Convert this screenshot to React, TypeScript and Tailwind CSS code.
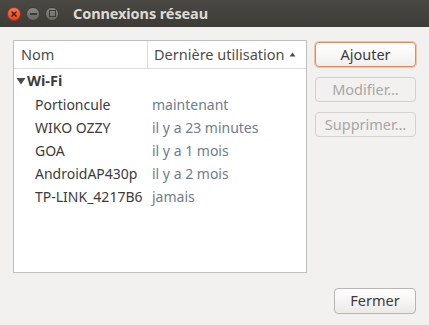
const rows = [
  { name: "Portioncule", when: "maintenant" },
  { name: "WIKO OZZY", when: "il y a 23 minutes" },
  { name: "GOA", when: "il y a 1 mois" },
  { name: "AndroidAP430p", when: "il y a 2 mois" },
  { name: "TP-LINK_4217B6", when: "jamais" },
];

function WinButton({ kind }: { kind: "close" | "min" | "max" }) {
  if (kind === "close") {
    return (
      <div className="w-[14px] h-[14px] rounded-full bg-gradient-to-b from-[#f77b52] to-[#e0451a] border border-[#a8330f] flex items-center justify-center">
        <svg width="6" height="6" viewBox="0 0 6 6">
          <path d="M0.5 0.5 L5.5 5.5 M5.5 0.5 L0.5 5.5" stroke="#3a1a10" strokeWidth="1.3" />
        </svg>
      </div>
    );
  }
  return (
    <div className="w-[14px] h-[14px] rounded-full bg-gradient-to-b from-[#8a8983] to-[#66655f] border border-[#3e3d39] flex items-center justify-center">
      {kind === "min" ? (
        <div className="w-[7px] h-[2px] bg-[#3c3b37]" />
      ) : (
        <div className="w-[7px] h-[7px] border-[1.5px] border-[#3c3b37]" />
      )}
    </div>
  );
}

export default function App() {
  return (
    <div
      className="w-[429px] h-[325px] flex flex-col bg-[#f2f1f0] text-[14.5px] text-[#3c3c3c]"
      style={{ fontFamily: '"Noto Sans", "Open Sans", sans-serif' }}
    >
      {/* Title bar */}
      <div className="h-[27px] flex items-center bg-gradient-to-b from-[#4a4944] to-[#3c3b37] pl-[7px]">
        <div className="flex gap-[5px]">
          <WinButton kind="close" />
          <WinButton kind="min" />
          <WinButton kind="max" />
        </div>
        <span className="ml-[14px] text-[14.5px] font-bold text-[#dfdbd2] tracking-[-0.1px]">Connexions réseau</span>
      </div>

      <div className="flex-1 flex flex-col px-[13px] pt-[13px] pb-[11px]">
        <div className="flex gap-[8px]">
          {/* List */}
          <div className="w-[295px] h-[233px] border border-[#c0bfbc] bg-white flex flex-col">
            <div className="h-[28px] flex border-b border-[#dedddb] text-[#4c4c4c]">
              <div className="w-[134px] border-r border-[#dedddb] flex items-center pl-[7px]">Nom</div>
              <div className="flex-1 flex items-center pl-[6px] pr-[10px]">
                <span className="whitespace-nowrap">Dernière utilisation</span>
                <svg className="ml-auto" width="7" height="5" viewBox="0 0 7 5">
                  <path d="M3.5 0.5 L6.5 4.5 L0.5 4.5 Z" fill="#4c4c4c" />
                </svg>
              </div>
            </div>
            <div className="h-[24px] flex items-center pl-[2px]">
              <svg width="10" height="8" viewBox="0 0 10 8">
                <path d="M0.5 1 L9.5 1 L5 7.5 Z" fill="#4c4c4c" />
              </svg>
              <span className="ml-[1px] font-bold text-[#3c3c3c]">Wi-Fi</span>
            </div>
            {rows.map((r) => (
              <div key={r.name} className="h-[23px] flex items-center text-[14px]">
                <div className="w-[138px] pl-[21px] whitespace-nowrap">{r.name}</div>
                <div className="text-[#6f7d8d] whitespace-nowrap">{r.when}</div>
              </div>
            ))}
          </div>

          {/* Side buttons */}
          <div className="flex flex-col gap-[10px] pt-[2px]">
            <button className="w-[101px] h-[25px] rounded-[4px] border border-[#e08a62] shadow-[0_0_0_1px_#f3c1a7] bg-gradient-to-b from-white to-[#f1f0ee] text-[#3c3c3c]">
              Ajouter
            </button>
            <button className="w-[101px] h-[25px] rounded-[4px] border border-[#d3d2cf] bg-[#f2f1f0] text-[#a8a8a6]">
              Modifier…
            </button>
            <button className="w-[101px] h-[25px] rounded-[4px] border border-[#d3d2cf] bg-[#f2f1f0] text-[#a8a8a6]">
              Supprimer…
            </button>
          </div>
        </div>

        <div className="mt-auto flex justify-end">
          <button className="w-[82px] h-[26px] rounded-[4px] border border-[#b8b6b2] bg-gradient-to-b from-white to-[#eceae7] text-[#3c3c3c]">
            Fermer
          </button>
        </div>
      </div>
    </div>
  );
}
